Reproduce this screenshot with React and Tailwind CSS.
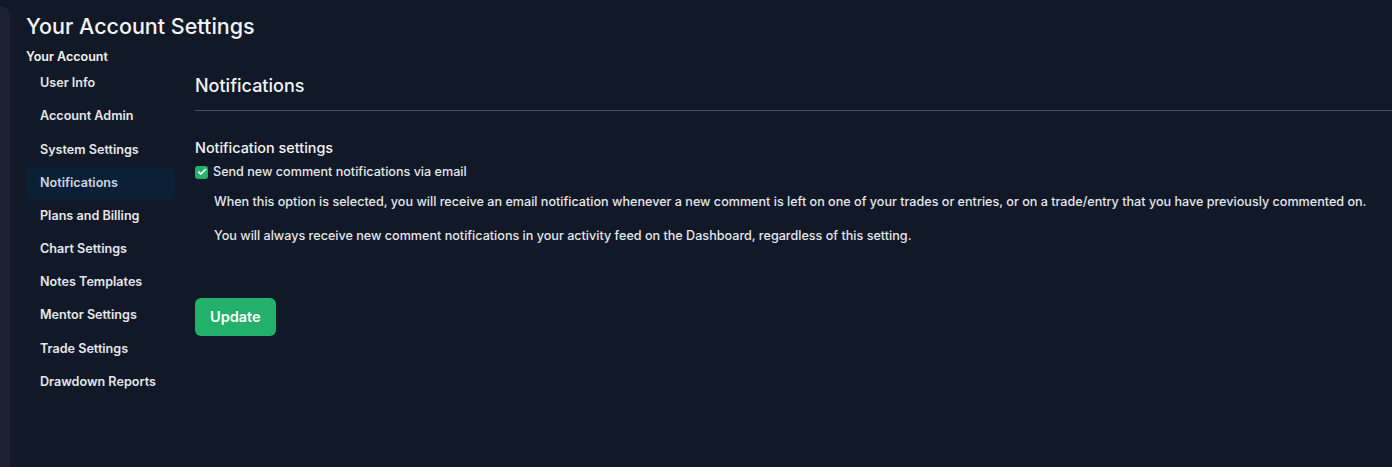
import React, { useState } from "react";
import { Check } from "lucide-react";

const NAV = [
  "User Info",
  "Account Admin",
  "System Settings",
  "Notifications",
  "Plans and Billing",
  "Chart Settings",
  "Notes Templates",
  "Mentor Settings",
  "Trade Settings",
  "Drawdown Reports",
];

export default function App() {
  const [active, setActive] = useState("Notifications");
  const [emailOn, setEmailOn] = useState(true);

  return (
    <div className="flex h-[467px] w-full overflow-hidden bg-[#111827] text-[#e5e7eb]" style={{ fontFamily: "Inter, 'Noto Sans', sans-serif" }}>
      {/* left rail */}
      <div className="mt-[6px] w-[10px] shrink-0 rounded-tr-[10px] bg-[#1d2230]" />

      <div className="flex-1 pl-[16px]">
        <h1 className="mt-[12px] text-[21.5px] leading-[28px] font-medium text-[#f3f4f6]">Your Account Settings</h1>

        <div className="flex">
          <aside className="w-[149px] shrink-0">
            <div className="mt-[8px] text-[12.5px] leading-[18px] font-semibold text-[#f3f4f6]">Your Account</div>
            <ul className="mt-[1px]">
              {NAV.map((n) => (
                <li key={n}>
                  <button
                    onClick={() => setActive(n)}
                    className={`flex h-[33.2px] w-full items-center rounded-md pl-[14px] text-left text-[12.6px] font-semibold ${
                      active === n ? "bg-[#0b2035] text-[#cbd5e1]" : "text-[#e5e7eb]"
                    }`}
                  >
                    {n}
                  </button>
                </li>
              ))}
            </ul>
          </aside>

          <main className="ml-[20px] flex-1">
            <h2 className="mt-[34px] text-[18px] leading-[24px] font-medium text-[#f3f4f6]">Notifications</h2>
            <div className="mt-[12px] h-px bg-[#4b5263]" />

            <h3 className="mt-[27px] text-[14.4px] leading-[20px] font-medium text-[#f3f4f6]">Notification settings</h3>
            <label className="mt-[5px] flex items-center gap-[5px] text-[12.6px] leading-[18px] font-medium">
              <button
                onClick={() => setEmailOn(!emailOn)}
                className={`flex h-[13px] w-[13px] items-center justify-center rounded-[3px] ${emailOn ? "bg-[#22b06b]" : "border border-gray-500"}`}
              >
                {emailOn && <Check size={10} strokeWidth={4} className="text-white" />}
              </button>
              Send new comment notifications via email
            </label>

            <div className="ml-[19px] text-[12.6px] leading-[18px] font-medium text-[#e5e7eb]">
              <p className="mt-[12px]">
                When this option is selected, you will receive an email notification whenever a new comment is left on one of your trades or entries, or on a trade/entry that you have previously commented on.
              </p>
              <p className="mt-[16px]">
                You will always receive new comment notifications in your activity feed on the Dashboard, regardless of this setting.
              </p>
            </div>

            <button className="mt-[53px] h-[38px] rounded-md bg-[#22b06b] px-[15px] text-[14.5px] font-semibold text-white">
              Update
            </button>
          </main>
        </div>
      </div>
    </div>
  );
}
